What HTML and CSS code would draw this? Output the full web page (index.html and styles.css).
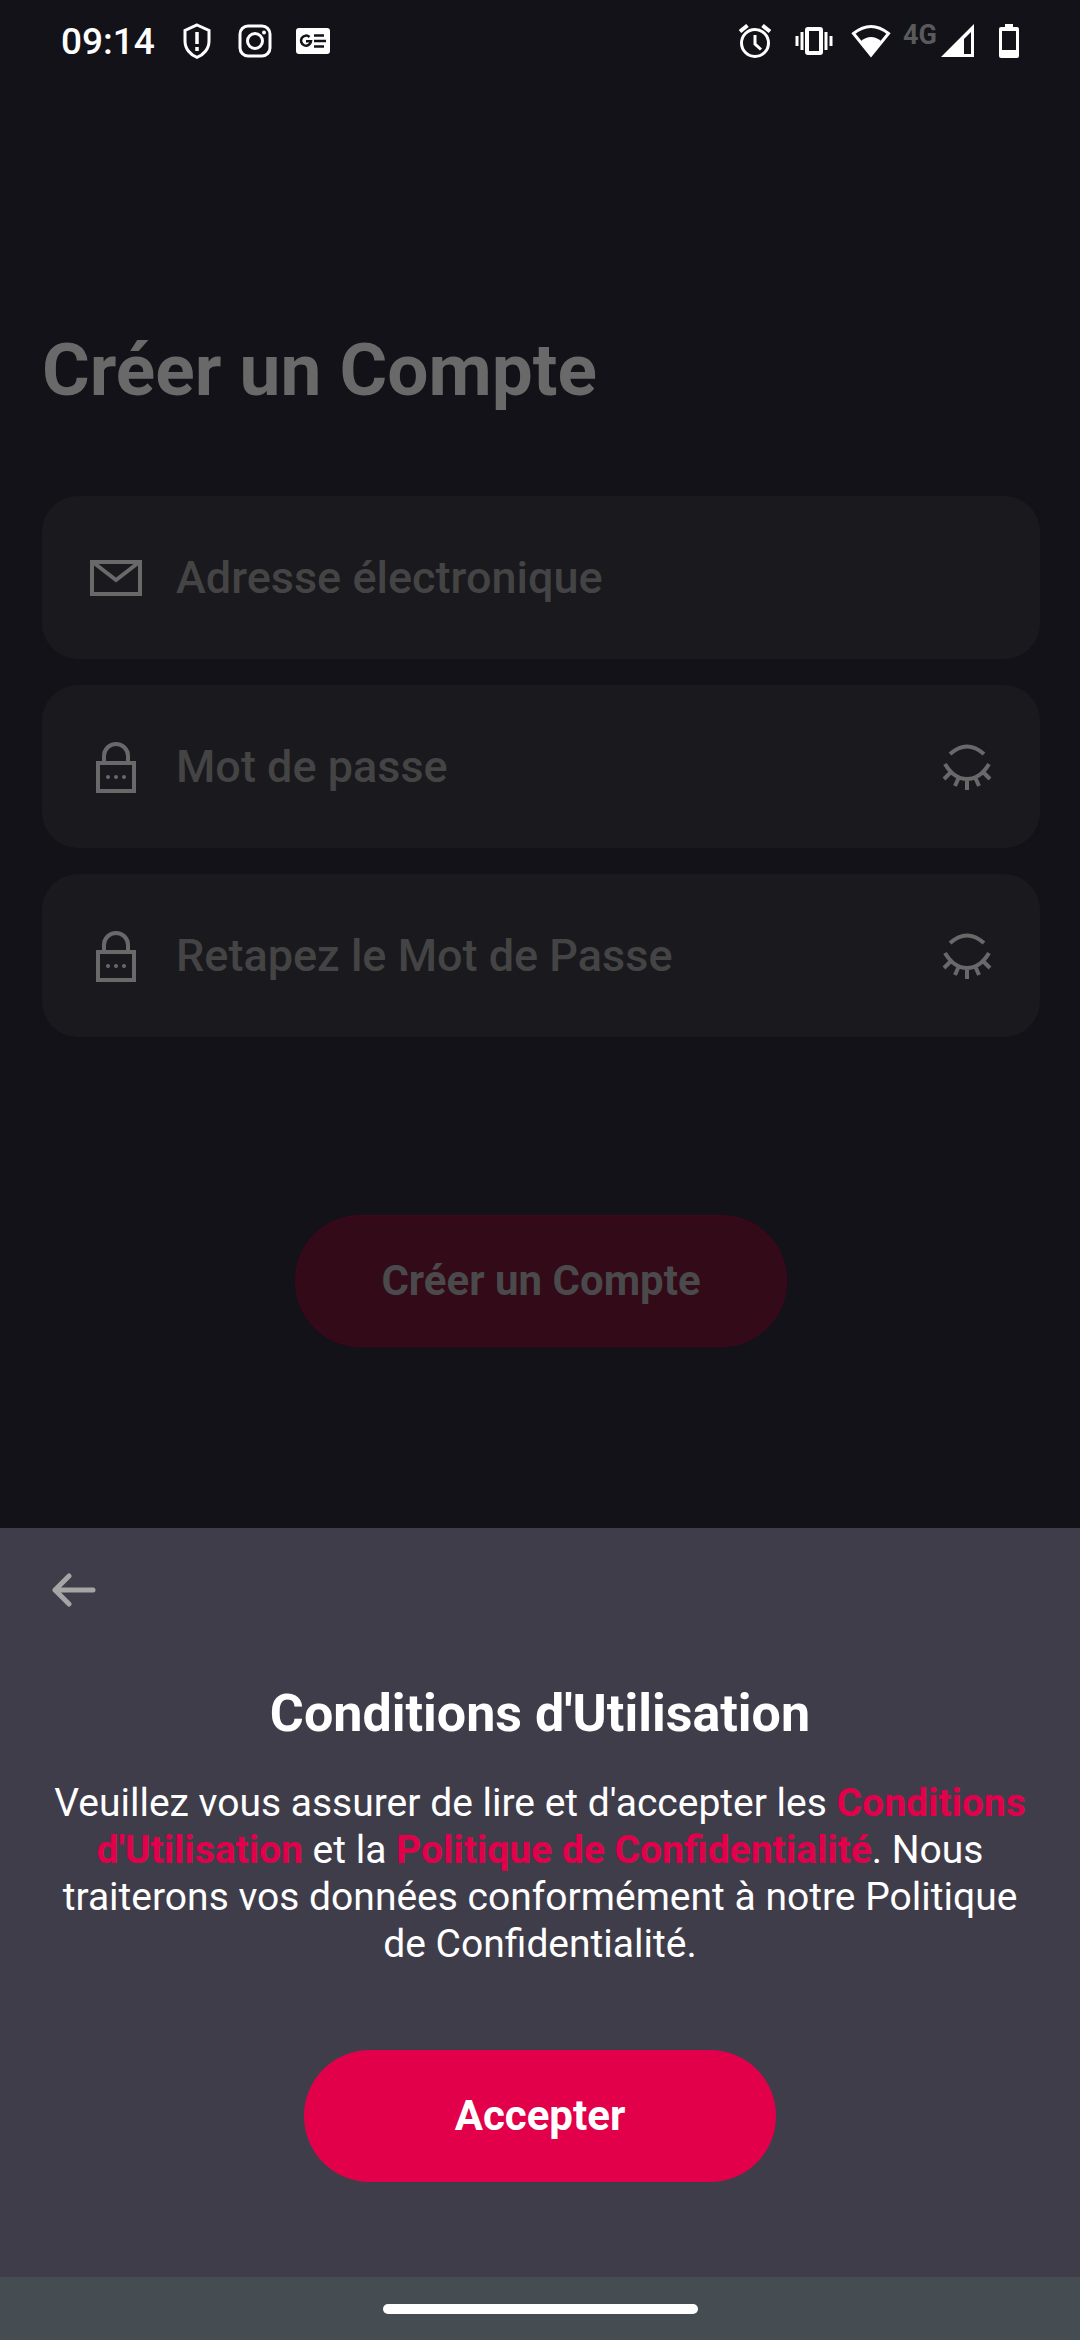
FILE: index.html
```html
<!DOCTYPE html>
<html lang="fr">
<head>
<meta charset="utf-8">
<meta name="viewport" content="width=device-width, initial-scale=1">
<title>Créer un Compte</title>
<link rel="stylesheet" href="styles.css">
</head>
<body>
<svg class="sprite" aria-hidden="true">
  <symbol id="lock" viewBox="0 0 52 52">
    <path d="M8 22h36v28H8z M14 21v-6a12 12 0 0 1 24 0v6" fill="none" stroke="currentColor" stroke-width="4"/>
    <circle cx="18" cy="36" r="2"/><circle cx="26" cy="36" r="2"/><circle cx="34" cy="36" r="2"/>
  </symbol>
  <symbol id="eye" viewBox="0 0 50 46">
    <path d="M8 10q17-15 34 0M3 20q9 15 22 15t22-15M9 28l-7 7M17 33l-4 9M25 35v11M33 33l4 9M41 28l7 7" fill="none" stroke="currentColor" stroke-width="4"/>
  </symbol>
</svg>

<header class="status">
  <div class="status-left">
    <time class="clock">09:14</time>
    <svg class="icon-shield" width="28" height="36" viewBox="0 0 28 36" fill="none" stroke="#fff" stroke-width="3"><path d="M14 2L26 7.500V18c0 8-5.500 14-12 16.300C7.500 32 2 26 2 18V7.500z"/><path d="M14 9v12M14 24v4" stroke-width="3.500"/></svg>
    <svg class="icon-camera" width="34" height="34" viewBox="0 0 34 34" fill="none" stroke="#fff" stroke-width="3"><rect x="2" y="2" width="30" height="30" rx="8"/><circle cx="17" cy="17" r="7.500"/><circle cx="26" cy="8.500" r="2" fill="#fff" stroke="none"/></svg>
    <svg class="icon-news" width="34" height="26" viewBox="0 0 34 26"><rect width="34" height="26" rx="3" fill="#fff"/><path d="M13.500 9A5 5 0 1 0 15 13.300H10M18 7.500h10M18 13h12M18 18.500h10" fill="none" stroke="#131218" stroke-width="2.500"/></svg>
  </div>
  <div class="status-right">
    <svg width="34" height="34" viewBox="0 0 34 34" fill="none" stroke="#fff" stroke-width="3"><circle cx="17" cy="19" r="13.500"/><path d="M17 11v9l6 5.500"/><path d="M2 7.500L9.500 1.500M24.500 1.500L32 7.500" stroke-width="4"/></svg>
    <svg class="icon-vibrate" width="38" height="28" viewBox="0 0 38 28" fill="none" stroke="#fff" stroke-width="3"><rect x="12" y="2" width="14" height="24" rx="1" stroke-width="4"/><path d="M2 9v10M7 5v18M31 5v18M36 9v10"/></svg>
    <svg class="icon-wifi" width="40" height="34" viewBox="0 0 40 34"><path d="M2.500 9.500Q20-4.500 37.500 9.500L20 31z" fill="none" stroke="#fff" stroke-width="3"/><path d="M10 17q10-8 20 0L20 32z" fill="#fff"/></svg>
    <span class="network">4G</span>
    <svg class="icon-signal" width="34" height="34" viewBox="0 0 34 34"><path d="M33 0v33H0z" fill="#fff"/><path d="M30 8v22h-7V15z" fill="#131218"/></svg>
    <svg width="20" height="34" viewBox="0 0 20 34"><path d="M6 0h8v3h4q2 0 2 2v27q0 2-2 2H2q-2 0-2-2V5q0-2 2-2h4z" fill="#fff"/><path d="M3 7h14v19H3z" fill="#131218"/></svg>
  </div>
</header>

<main class="signup">
  <h1 class="title">Créer un Compte</h1>
  <form class="form">
    <div class="field">
      <label class="field-icon" for="email" aria-label="Adresse électronique">
        <svg width="52" height="52" viewBox="0 0 52 52" fill="none" stroke="currentColor" stroke-width="4"><path d="M2 10h48v32H2zM4 11l22 17L48 11"/></svg>
      </label>
      <input class="input" id="email" type="email" placeholder="Adresse électronique">
    </div>
    <div class="field">
      <label class="field-icon" for="password" aria-label="Mot de passe">
        <svg width="52" height="52" fill="currentColor"><use href="#lock"/></svg>
      </label>
      <input class="input" id="password" type="password" placeholder="Mot de passe">
      <button class="reveal" type="button" aria-label="Afficher le mot de passe"><svg width="50" height="46"><use href="#eye"/></svg></button>
    </div>
    <div class="field">
      <label class="field-icon" for="confirm" aria-label="Retapez le Mot de Passe">
        <svg width="52" height="52" fill="currentColor"><use href="#lock"/></svg>
      </label>
      <input class="input" id="confirm" type="password" placeholder="Retapez le Mot de Passe">
      <button class="reveal" type="button" aria-label="Afficher le mot de passe"><svg width="50" height="46"><use href="#eye"/></svg></button>
    </div>
    <button class="pill create" type="submit">Créer un Compte</button>
  </form>
</main>

<section class="sheet" role="dialog" aria-labelledby="terms-title">
  <button class="back" type="button" aria-label="Retour">
    <svg width="44" height="36" viewBox="0 0 44 36" fill="none" stroke="currentColor" stroke-width="5" stroke-linecap="round" stroke-linejoin="round"><path d="M41 18H3M17 4L3 18l14 14"/></svg>
  </button>
  <h2 class="sheet-title" id="terms-title">Conditions d'Utilisation</h2>
  <p class="terms">Veuillez vous assurer de lire et d'accepter les <a class="link" href="#conditions">Conditions d'Utilisation</a> et la <a class="link" href="#confidentialite">Politique de Confidentialité</a>. Nous traiterons vos données conformément à notre Politique de Confidentialité.</p>
  <button class="pill accept" type="button">Accepter</button>
</section>

<footer class="navbar"><div class="handle"></div></footer>
</body>
</html>
```

FILE: styles.css
```css
* { box-sizing: border-box; }

body {
  margin: 0;
  min-height: 100vh;
  display: flex;
  flex-direction: column;
  background: #131218;
  color: #fff;
  font-family: Roboto, "Liberation Sans", sans-serif;
}

h1, h2, p { margin: 0; }

svg { display: block; flex: none; }

button {
  border: 0;
  padding: 0;
  font-family: inherit;
  cursor: pointer;
}

.sprite { position: absolute; width: 0; height: 0; }

/* Status bar */
.status {
  height: 82px;
  padding: 0 61px;
  display: flex;
  justify-content: space-between;
  align-items: center;
}

.status-left, .status-right { display: flex; align-items: center; }
.clock { font-size: 37px; line-height: 42px; font-weight: 500; padding-top: 2px; }
.icon-shield { margin-left: 28px; }
.icon-camera { margin-left: 27px; }
.icon-news { margin-left: 24px; }
.icon-vibrate { margin-left: 23px; }
.icon-wifi { margin-left: 18px; }
.icon-signal { margin-right: 24px; margin-left: 4px; }
.network {
  margin-left: 12px;
  padding-bottom: 12px;
  font-size: 27px;
  line-height: 28px;
  font-weight: 700;
  color: #5a5a5d;
}

/* Account form */
.signup { flex: 1; padding: 245px 40px 0 42px; }

.title {
  font-size: 73px;
  line-height: 86px;
  font-weight: 700;
  color: #696969;
}

.form {
  margin-top: 83px;
  display: flex;
  flex-direction: column;
  gap: 26px;
}

.field {
  height: 163px;
  padding: 0 48px;
  display: flex;
  align-items: center;
  gap: 34px;
  border-radius: 36px;
  background: #1a191e;
  color: #696969;
}

.input {
  flex: 1;
  min-width: 0;
  padding: 0;
  border: 0;
  outline: 0;
  background: none;
  color: #696969;
  font-family: inherit;
  font-size: 45px;
  line-height: 54px;
  font-weight: 500;
}

.input::placeholder { color: #444; opacity: 1; }

.reveal { background: none; color: inherit; }

.pill {
  align-self: center;
  height: 132px;
  border-radius: 66px;
  font-size: 42px;
  line-height: 50px;
  font-weight: 700;
}

.create {
  margin-top: 152px;
  padding: 0 84px;
  border: 2px solid #3b081b;
  background: #330a18;
  color: #4a494b;
}

/* Terms sheet */
.sheet {
  padding: 44px 48px 95px;
  display: flex;
  flex-direction: column;
  background: #403d4b;
}

.back { align-self: flex-start; padding: 0 4px; background: none; color: #a5a5a5; }

.sheet-title {
  margin-top: 75px;
  font-size: 52px;
  line-height: 62px;
  font-weight: 700;
  text-align: center;
}

.terms {
  margin-top: 35px;
  font-size: 39px;
  line-height: 47px;
  text-align: center;
}

.link { color: #e2004b; font-weight: 700; text-decoration: none; }

.accept {
  margin-top: 82px;
  padding: 0 151px;
  background: #e2004b;
  color: #fff;
}

/* Gesture bar */
.navbar {
  height: 63px;
  display: flex;
  justify-content: center;
  align-items: center;
  background: #454d52;
}

.handle { width: 315px; height: 10px; border-radius: 5px; background: #fff; }
```
